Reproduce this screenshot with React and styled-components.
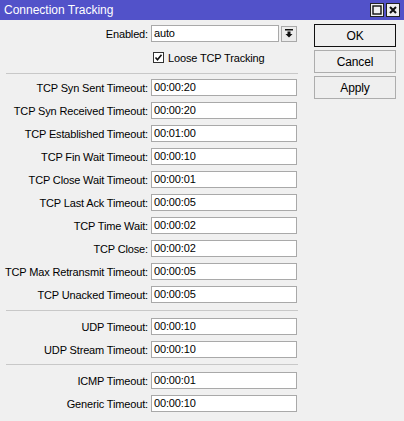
import React from 'react';
import styled, { createGlobalStyle } from 'styled-components';

const GlobalStyle = createGlobalStyle`
  html, body {
    margin: 0;
    padding: 0;
    background: #f0f0f0;
  }
  body {
    font-family: 'Liberation Sans', Arial, sans-serif;
    font-size: 11px;
    letter-spacing: -0.15px;
    color: #000;
  }
`;

const Window = styled.div`
  width: 404px;
  height: 421px;
  background: #f0f0f0;
  overflow: hidden;
`;

const TitleBar = styled.div`
  height: 20px;
  background: #5252c9;
  display: flex;
  align-items: center;
  justify-content: space-between;
  padding: 0 4px 0 4px;
  box-sizing: border-box;
`;

const Title = styled.div`
  color: #fff;
  font-size: 12px;
  letter-spacing: 0;
`;

const TitleButtons = styled.div`
  display: flex;
  gap: 2px;
`;

const TitleButton = styled.div`
  width: 14px;
  height: 14px;
  background: #f0f0f0;
  border: 1px solid #222;
  box-sizing: border-box;
  display: flex;
  align-items: center;
  justify-content: center;
`;

const Body = styled.div`
  display: flex;
  padding-top: 5px;
`;

const Form = styled.div`
  width: 292px;
  margin-left: 6px;
  display: flex;
  flex-direction: column;
`;

const Row = styled.div`
  display: flex;
  align-items: center;
  height: 17px;
  margin-top: ${(p) => p.top || 0}px;
`;

const Label = styled.div`
  width: 142px;
  display: flex;
  justify-content: flex-end;
  padding-right: 3px;
  white-space: nowrap;
`;

const Field = styled.div`
  width: ${(p) => p.width || 146}px;
  height: 17px;
  box-sizing: border-box;
  background: #fff;
  border: 1px solid #a9a9a9;
  padding-left: 2px;
  line-height: 15px;
`;

const DropButton = styled.div`
  width: 16px;
  height: 16px;
  margin-left: 2px;
  box-sizing: border-box;
  border: 1px solid #a9a9a9;
  background: #ececec;
  display: flex;
  align-items: center;
  justify-content: center;
`;

const CheckRow = styled.label`
  display: flex;
  align-items: center;
  gap: 4px;
  margin-left: 147px;
  margin-top: 9px;
  height: 13px;
`;

const CheckBox = styled.div`
  width: 11px;
  height: 11px;
  box-sizing: border-box;
  border: 1px solid #333;
  background: #fff;
  display: flex;
  align-items: center;
  justify-content: center;
`;

const Separator = styled.div`
  height: 1px;
  background: #c8c8c8;
  margin-top: ${(p) => p.top}px;
  margin-bottom: ${(p) => p.bottom}px;
`;

const Buttons = styled.div`
  margin-left: 16px;
  margin-top: -1px;
  display: flex;
  flex-direction: column;
  gap: 3px;
`;

const Button = styled.div`
  width: 82px;
  height: 23px;
  box-sizing: border-box;
  border: 1px solid ${(p) => (p.primary ? '#111' : '#adadad')};
  background: #efefef;
  font-size: 12px;
  display: flex;
  align-items: center;
  justify-content: center;
`;

const tcpRows = [
  ['TCP Syn Sent Timeout:', '00:00:20'],
  ['TCP Syn Received Timeout:', '00:00:20'],
  ['TCP Established Timeout:', '00:01:00'],
  ['TCP Fin Wait Timeout:', '00:00:10'],
  ['TCP Close Wait Timeout:', '00:00:01'],
  ['TCP Last Ack Timeout:', '00:00:05'],
  ['TCP Time Wait:', '00:00:02'],
  ['TCP Close:', '00:00:02'],
  ['TCP Max Retransmit Timeout:', '00:00:05'],
  ['TCP Unacked Timeout:', '00:00:05'],
];

const udpRows = [
  ['UDP Timeout:', '00:00:10'],
  ['UDP Stream Timeout:', '00:00:10'],
];

const otherRows = [
  ['ICMP Timeout:', '00:00:01'],
  ['Generic Timeout:', '00:00:10'],
];

const FieldRows = ({ rows }) =>
  rows.map(([label, value], i) => (
    <Row key={label} top={i === 0 ? 0 : 6}>
      <Label>{label}</Label>
      <Field>{value}</Field>
    </Row>
  ));

export default function App() {
  return (
    <Window>
      <GlobalStyle />
      <TitleBar>
        <Title>Connection Tracking</Title>
        <TitleButtons>
          <TitleButton>
            <svg width="10" height="10" viewBox="0 0 10 10">
              <rect x="1" y="1" width="8" height="8" fill="none" stroke="#111" strokeWidth="1.4" />
            </svg>
          </TitleButton>
          <TitleButton>
            <svg width="10" height="10" viewBox="0 0 10 10">
              <path d="M2 2 L8 8 M8 2 L2 8" stroke="#111" strokeWidth="2" />
            </svg>
          </TitleButton>
        </TitleButtons>
      </TitleBar>
      <Body>
        <Form>
          <Row>
            <Label>Enabled:</Label>
            <Field width={128}>auto</Field>
            <DropButton>
              <svg width="8" height="9" viewBox="0 0 8 9">
                <rect x="0" y="0" width="8" height="1.5" fill="#111" />
                <path d="M2.5 2.5 H5.5 V5 H7.5 L4 8.5 L0.5 5 H2.5 Z" fill="#111" />
              </svg>
            </DropButton>
          </Row>
          <CheckRow>
            <CheckBox>
              <svg width="9" height="9" viewBox="0 0 9 9">
                <path d="M1.5 4.5 L3.5 6.8 L7.5 1.8" fill="none" stroke="#111" strokeWidth="1.6" />
              </svg>
            </CheckBox>
            Loose TCP Tracking
          </CheckRow>
          <Separator top={9} bottom={5} />
          <FieldRows rows={tcpRows} />
          <Separator top={7} bottom={7} />
          <FieldRows rows={udpRows} />
          <Separator top={6} bottom={7} />
          <FieldRows rows={otherRows} />
        </Form>
        <Buttons>
          <Button primary>OK</Button>
          <Button>Cancel</Button>
          <Button>Apply</Button>
        </Buttons>
      </Body>
    </Window>
  );
}
